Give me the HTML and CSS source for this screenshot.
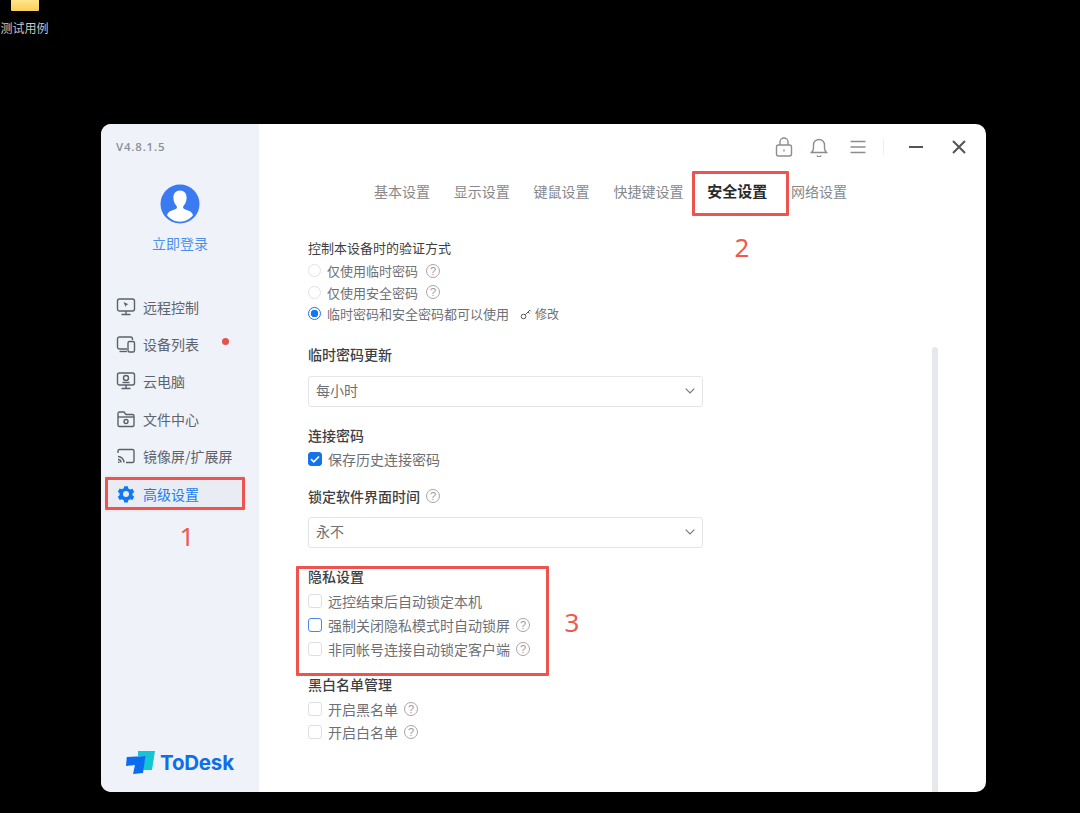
FILE: index.html
```html
<!DOCTYPE html>
<html lang="zh-CN">
<head>
<meta charset="utf-8">
<title>ToDesk 高级设置</title>
<link rel="stylesheet" href="styles.css">
</head>
<body>
<div class="desktop-icon">
  <div class="folder"></div>
  <div class="desktop-label">测试用例</div>
</div>

<div class="window">
  <aside class="sidebar">
    <div class="version">V4.8.1.5</div>
    <div class="profile">
      <svg class="avatar" viewBox="0 0 40 40"><circle cx="20" cy="20" r="19.5" fill="#3b7bf2"/><path d="M20 6.500c4.200 0 6.600 3 6.600 7.300 0 3.500-1.500 6.700-3.300 8.400-.5 1.100-.2 2.200 1 2.900 2.800 1.300 6.500 2 8 4.300.5.800.7 1.500.5 2.300-3 3-7.700 6-12.800 6s-9.800-3-12.800-6c-.2-.8 0-1.500.5-2.300 1.500-2.300 5.200-3 8-4.300 1.200-.7 1.500-1.800 1-2.900-1.800-1.700-3.300-4.900-3.300-8.400 0-4.300 2.400-7.300 6.600-7.300z" fill="#fff"/></svg>
      <div class="login">立即登录</div>
    </div>
    <nav class="nav">
      <div class="nav-item">
        <svg class="nav-icon" viewBox="0 0 20 20"><rect x="1.500" y="2" width="17" height="12" rx="2"/><path d="M10 14v3M5.500 17.500h9"/><path class="fill" d="M7.500 5l5 2.300-2 .7-.8 2z"/></svg>
        <span>远程控制</span>
      </div>
      <div class="nav-item">
        <svg class="nav-icon" viewBox="0 0 20 20"><path d="M11 15H3.500a2 2 0 0 1-2-2V5a2 2 0 0 1 2-2h11a2 2 0 0 1 2 2v1"/><path d="M3.500 17.500H11"/><rect x="12" y="7.500" width="6.500" height="10.500" rx="1.500"/></svg>
        <span>设备列表</span>
        <i class="dot"></i>
      </div>
      <div class="nav-item">
        <svg class="nav-icon" viewBox="0 0 20 20"><rect x="1.500" y="2" width="17" height="12" rx="2"/><path d="M10 14v3M5.500 17.500h9"/><circle cx="10" cy="7" r="2.500"/><path d="M6.500 11.500h7"/></svg>
        <span>云电脑</span>
      </div>
      <div class="nav-item">
        <svg class="nav-icon" viewBox="0 0 20 20"><path d="M2 16V4.500A1.500 1.500 0 0 1 3.500 3H8l2 2.500h6.500A1.500 1.500 0 0 1 18 7v9a1.500 1.500 0 0 1-1.500 1.500h-13A1.500 1.500 0 0 1 2 16z"/><path d="M2 8h16"/><circle cx="10" cy="12.500" r="2"/></svg>
        <span>文件中心</span>
      </div>
      <div class="nav-item">
        <svg class="nav-icon" viewBox="0 0 20 20"><path d="M2 7V5a1.500 1.500 0 0 1 1.500-1.500h13A1.500 1.500 0 0 1 18 5v10a1.500 1.500 0 0 1-1.500 1.500H10"/><path d="M2 10.500a6 6 0 0 1 6 6M2 13.500a3 3 0 0 1 3 3"/><path class="fill" d="M2 15.500h1.500v1.500H2z"/></svg>
        <span>镜像屏/扩展屏</span>
      </div>
      <div class="nav-item nav-item-active">
        <svg class="nav-icon-solid" viewBox="0 0 20 20">
          <path d="M7.900 1.600h4.200l.5 2.600 2.200 1.300 2.500-.9 2.100 3.600-2 1.700v2.200l2 1.700-2.100 3.600-2.500-.9-2.200 1.300-.5 2.600H7.900l-.5-2.600-2.200-1.300-2.500.9-2.100-3.600 2-1.700V9.600l-2-1.700 2.100-3.600 2.500.9 2.200-1.300z" transform="translate(1.250 .75) scale(.875)"/>
          <circle class="gear-hole" cx="10" cy="10" r="3"/>
        </svg>
        <span>高级设置</span>
      </div>
    </nav>
    <div class="brand">
      <svg class="brand-mark" viewBox="0 0 29 24"><path d="M12 0h17l-3 19h-9l2-14h-7z" fill="#12c6d4"/><path d="M.8 6 19.500 5 17 22l-10 1 2-9-9 1z" fill="#0b6cf2"/></svg>
      <span class="brand-name">ToDesk</span>
    </div>
  </aside>

  <main class="main">
    <header class="toolbar">
      <svg class="tool-icon" viewBox="0 0 20 20"><rect x="2.500" y="8" width="15" height="11" rx="2"/><path d="M6 8V5a4 4 0 0 1 8 0v3"/><path d="M10 12.500v2"/></svg>
      <svg class="tool-icon" viewBox="0 0 20 20"><path d="M2.500 15.500c1.500-1.500 2-2.500 2-4.500V8a5.500 5.500 0 0 1 11 0v3c0 2 .5 3 2 4.500z"/><path d="M8 18.500a2.200 2.200 0 0 0 4 0"/></svg>
      <svg class="tool-icon tool-menu" viewBox="0 0 20 20"><path d="M2.500 4.500h15M2.500 10h15M2.500 15.500h15"/></svg>
      <span class="tool-divider"></span>
      <svg class="win-icon win-min" viewBox="0 0 20 20"><path d="M3 10h14"/></svg>
      <svg class="win-icon win-close" viewBox="0 0 20 20"><path d="M4 4l12 12M16 4L4 16"/></svg>
    </header>

    <div class="tabs">
      <span>基本设置</span>
      <span>显示设置</span>
      <span>键鼠设置</span>
      <span>快捷键设置</span>
      <span class="tab-active">安全设置</span>
      <span>网络设置</span>
    </div>

    <div class="form">
      <section class="group">
        <h3 class="heading heading-light">控制本设备时的验证方式</h3>
        <label class="row row-s"><i class="radio"></i>仅使用临时密码<i class="help help-wide">?</i></label>
        <label class="row row-s"><i class="radio"></i>仅使用安全密码<i class="help help-wide">?</i></label>
        <label class="row row-s"><i class="radio radio-on"></i>临时密码和安全密码都可以使用
          <span class="edit"><svg class="key" viewBox="0 0 12 12"><circle cx="3.500" cy="8.500" r="2.300"/><path d="M5.300 6.700 10 2M8 4l1.500 1.500M9.700 2.300l1 1"/></svg>修改</span>
        </label>
      </section>

      <section class="group gap-18">
        <h3 class="heading">临时密码更新</h3>
        <div class="select select-low">每小时<svg class="chevron" viewBox="0 0 10 6"><path d="M.7.7 5 5 9.300.7"/></svg></div>
      </section>

      <section class="group gap-17">
        <h3 class="heading">连接密码</h3>
        <label class="row row-c"><i class="check check-on"><svg viewBox="0 0 14 14"><path d="M3 7.200l2.800 2.600L11 4.500"/></svg></i>保存历史连接密码</label>
      </section>

      <section class="group gap-15">
        <h3 class="heading">锁定软件界面时间<i class="help">?</i></h3>
        <div class="select">永不<svg class="chevron" viewBox="0 0 10 6"><path d="M.7.7 5 5 9.300.7"/></svg></div>
      </section>

      <section class="group gap-17">
        <h3 class="heading">隐私设置</h3>
        <label class="row row-m"><i class="check"></i>远控结束后自动锁定本机</label>
        <label class="row row-m"><i class="check check-focus"></i>强制关闭隐私模式时自动锁屏<i class="help">?</i></label>
        <label class="row row-m"><i class="check"></i>非同帐号连接自动锁定客户端<i class="help">?</i></label>
      </section>

      <section class="group gap-12 group-lists">
        <h3 class="heading">黑白名单管理</h3>
        <label class="row row-m"><i class="check"></i>开启黑名单<i class="help">?</i></label>
        <label class="row row-m"><i class="check"></i>开启白名单<i class="help">?</i></label>
      </section>
    </div>
    <div class="scrollbar"></div>
  </main>
</div>

<div class="mark mark-1"></div>
<div class="mark mark-2"></div>
<div class="mark mark-3"></div>
<div class="mark-num num-1">1</div>
<div class="mark-num num-2">2</div>
<div class="mark-num num-3">3</div>
</body>
</html>
```

FILE: styles.css
```css
* { box-sizing: border-box; }
html, body { margin: 0; height: 100%; }
body {
  background: #000;
  font-family: "Noto Sans CJK SC", "Noto Sans", sans-serif;
  overflow: hidden;
  position: relative;
}

/* desktop */
.desktop-icon { position: absolute; left: 0; top: 0; width: 49px; text-align: center; }
.folder {
  width: 28px; height: 11px; margin: 0 0 0 11px;
  background: linear-gradient(#ffe48a, #f9cf58);
  border-radius: 0 0 1px 1px;
}
.desktop-label { margin-top: 9px; font-size: 12px; line-height: 16px; color: #c9c9c9; white-space: nowrap; }

/* window */
.window {
  position: absolute; left: 101px; top: 124px;
  width: 885px; height: 668px;
  background: #fff; border-radius: 10px; overflow: hidden;
  display: flex;
}

/* sidebar */
.sidebar {
  width: 158px; flex: none;
  background: #eff3f9;
  display: flex; flex-direction: column;
  padding: 15px 0 17px;
}
.version { padding-left: 15px; font-family: "Open Sans", sans-serif; font-size: 11.500px; line-height: 16px; letter-spacing: .8px; font-weight: 600; color: #8b8f98; }
.profile { margin-top: 29px; display: flex; flex-direction: column; align-items: center; }
.avatar { width: 40px; height: 40px; display: block; }
.login { margin-top: 8px; font-size: 14px; line-height: 22px; color: #4a90ee; }
.nav { margin-top: 34px; padding: 0 14px 0 4px; display: flex; flex-direction: column; }
.nav-item {
  height: 37.400px; padding-left: 11px;
  display: flex; align-items: center; gap: 7px;
  font-size: 14px; color: #5d6470; position: relative;
  white-space: nowrap;
}
.nav-item-active { color: #1b7bf0; background: #e9edf3; }
.nav-icon { width: 20px; height: 20px; flex: none; fill: none; stroke: #5a616d; stroke-width: 1.400; }
.nav-icon .fill { fill: #5a616d; stroke: none; }
.nav-icon-solid { width: 20px; height: 20px; flex: none; fill: #0f78f2; }
.gear-hole { fill: #e9edf3; }
.dot { position: absolute; left: 117px; top: 13px; width: 7px; height: 7px; border-radius: 50%; background: #e6524f; }
.brand { margin-top: auto; padding-left: 25px; display: flex; align-items: center; gap: 5px; }
.brand-mark { width: 29px; height: 24px; flex: none; }
.brand-name { font-family: "Inter", sans-serif; font-weight: 700; font-size: 20.500px; line-height: 24px; letter-spacing: -.2px; color: #0f6ee8; }

/* main */
.main { flex: 1; min-width: 0; position: relative; }
.toolbar { height: 46px; padding: 0 17px 0 0; display: flex; align-items: center; justify-content: flex-end; gap: 15px; }
.tool-icon { width: 20px; height: 20px; fill: none; stroke: #8a8d92; stroke-width: 1.400; }
.tool-menu { margin-left: 4px; }
.tool-divider { width: 1px; height: 16px; background: #eceef1; }
.win-icon { width: 20px; height: 20px; fill: none; stroke: #50555c; stroke-width: 2; }
.win-min { margin-left: 7px; }
.win-close { margin-left: 8px; }
.tabs { margin-top: 10px; height: 22px; padding-left: 115px; display: flex; gap: 23.800px; font-size: 14px; line-height: 22px; color: #85888d; }
.tab-active { font-size: 15px; font-weight: 700; color: #2a2a2a; }

.form { margin-top: 35px; padding-left: 49px; }
.heading { margin: 0; height: 22px; display: flex; align-items: center; font-size: 14px; line-height: 22px; font-weight: 500; color: #3d3f44; }
.heading-light { font-size: 13px; font-weight: 400; }
.row { display: flex; align-items: center; font-size: 14px; color: #6d7076; white-space: nowrap; }
.row-s { height: 21.500px; font-size: 13px; }
.row-c { height: 22px; margin-top: 2px; }
.row-m { height: 24px; }
.group > .heading + .row-s { margin-top: 1px; }
.group > .heading + .row-m { margin-top: 2px; }
.group-lists > .heading + .row-m { margin-top: 3px; }
.group-lists > .row-m { height: 23px; }
.gap-18 { margin-top: 18px; }
.gap-17 { margin-top: 17px; }
.gap-15 { margin-top: 15px; }
.gap-12 { margin-top: 12px; }

.radio { width: 13px; height: 13px; border-radius: 50%; border: 1px solid #dfe1e5; margin-right: 6px; flex: none; background: #fff; }
.radio-on { border: 1px solid #1677f2; background: radial-gradient(circle, #1677f2 0 3.500px, #fff 4px); }
.check { width: 14px; height: 14px; border-radius: 3px; border: 1px solid #dcdfe3; margin-right: 6px; flex: none; background: #fff; display: block; }
.check svg { display: block; width: 100%; height: 100%; fill: none; stroke: #fff; stroke-width: 1.600; }
.check-on { background: #1473ea; border-color: #1473ea; }
.check-on svg { margin: -1px; width: 14px; height: 14px; }
.check-focus { border: 1.500px solid #4a86e8; }

.help {
  width: 14px; height: 14px; margin-left: 6px; flex: none;
  border: 1px solid #a3a6ab; border-radius: 50%;
  font-style: normal; font-size: 11px; line-height: 12px; text-align: center;
  color: #96999e; font-weight: 400; font-family: "Liberation Sans", sans-serif;
}
.help-wide { margin-left: 8px; }
.edit { display: inline-flex; align-items: center; margin-left: 11px; font-size: 12px; color: #6d7076; gap: 3px; }
.key { width: 12px; height: 12px; fill: none; stroke: #55585e; stroke-width: 1; }

.select {
  margin-top: 10px; width: 395px; height: 31px; padding: 0 8px 2px 7px;
  display: flex; align-items: center; justify-content: space-between;
  border: 1px solid #e3e5e8; border-radius: 3px;
  font-size: 14px; color: #6d7076; background: #fff;
}
.select-low { margin-top: 11px; }
.chevron { width: 10px; height: 6px; margin: 2px -1px 0 0; fill: none; stroke: #77797e; stroke-width: 1.200; }

.scrollbar { position: absolute; left: 673px; top: 223px; bottom: 0; width: 6px; background: #e6e8ec; border-radius: 3px 3px 0 0; }

/* annotations */
.mark { position: absolute; border: 3px solid #ef5350; border-radius: 1px; }
.mark-1 { left: 105px; top: 477px; width: 140px; height: 33px; }
.mark-2 { left: 692px; top: 171px; width: 97px; height: 45px; }
.mark-3 { left: 296px; top: 566px; width: 253px; height: 110px; }
.mark-num { position: absolute; width: 20px; text-align: center; font-family: "Noto Sans", sans-serif; font-size: 26px; line-height: 30px; color: #ef5a50; }
.num-1 { left: 177px; top: 521px; }
.num-2 { left: 732px; top: 232px; }
.num-3 { left: 562px; top: 607px; }
```
